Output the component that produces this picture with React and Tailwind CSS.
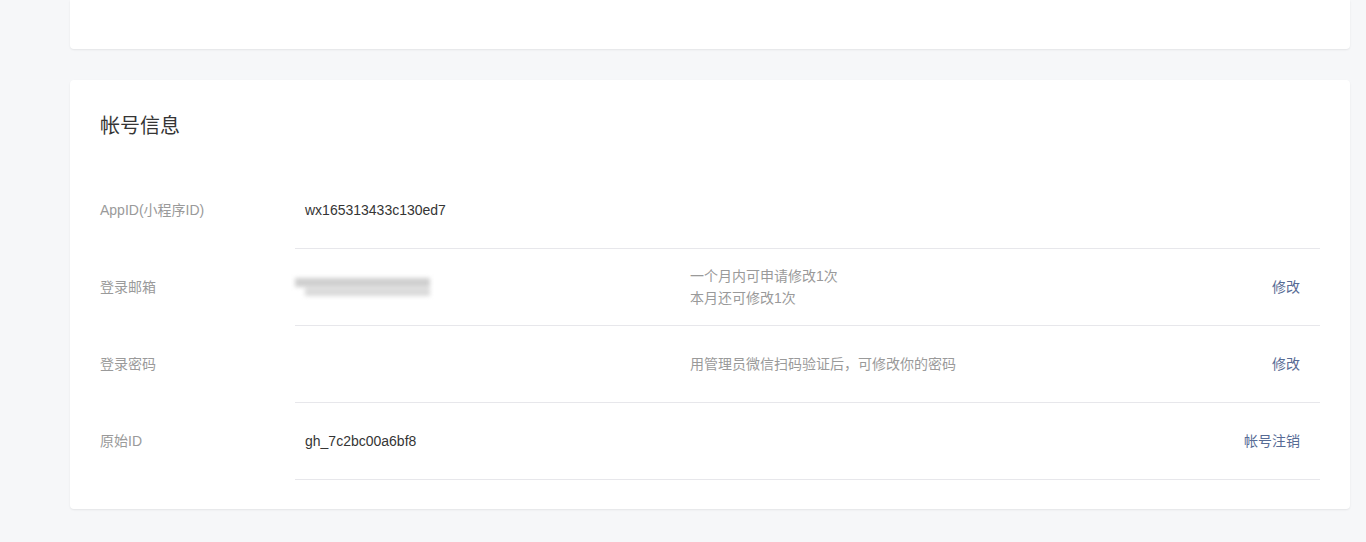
import React from 'react';

const rows = [
    { label: 'AppID(小程序ID)', value: 'wx165313433c130ed7' },
    { label: '登录邮箱', blurred: true, tips: ['一个月内可申请修改1次', '本月还可修改1次'], action: '修改' },
    { label: '登录密码', tips: ['用管理员微信扫码验证后，可修改你的密码'], action: '修改' },
    { label: '原始ID', value: 'gh_7c2bc00a6bf8', action: '帐号注销' },
];

function InfoRow({ row }) {
    return (
        <div className="flex">
            <div className="w-[195px] shrink-0 flex items-center text-[14px] text-[#9a9a9a]">
                {row.label}
            </div>
            <div className="flex-1 flex items-center h-[77px] pl-[10px] pr-[20px] border-b border-[#e7e7eb]">
                <div className="w-[385px] shrink-0 text-[14px] text-[#353535]">
                    {row.blurred ? (
                        // email is blurred in the source
                        <div className="flex flex-col gap-[1px] -ml-[10px] blur-[2px]">
                            <div className="h-[9px] w-[135px] bg-[#cfcfcf]" />
                            <div className="h-[8px] w-[125px] ml-[10px] bg-[#dadada]" />
                        </div>
                    ) : (
                        row.value
                    )}
                </div>
                <div className="flex-1 text-[14px] leading-[22px] text-[#9a9a9a]">
                    {row.tips && row.tips.map((t) => <div key={t}>{t}</div>)}
                </div>
                {row.action && (
                    <a className="text-[14px] text-[#576b95] cursor-pointer">{row.action}</a>
                )}
            </div>
        </div>
    );
}

export default function App() {
    return (
        <div className="min-h-[542px] bg-[#f6f7f9] pl-[70px] pr-[16px] font-['Liberation_Sans','Noto_Sans_CJK_SC',sans-serif]">
            <div className="h-[49px] bg-white rounded-b-[4px] shadow-[0_1px_2px_rgba(0,0,0,0.08)]" />

            <div className="mt-[31px] bg-white rounded-[4px] shadow-[0_1px_2px_rgba(0,0,0,0.08)] px-[30px] pt-[32px] pb-[29px]">
                <h2 className="text-[20px] leading-[28px] text-[#353535]">帐号信息</h2>
                <div className="mt-[32px]">
                    {rows.map((row) => (
                        <InfoRow key={row.label} row={row} />
                    ))}
                </div>
            </div>
        </div>
    );
}
